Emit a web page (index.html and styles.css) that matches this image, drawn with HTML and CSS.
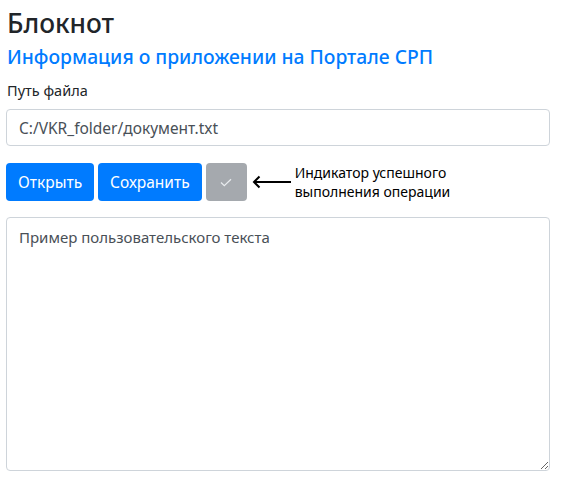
FILE: index.html
```html
<!DOCTYPE html>
<html lang="ru">
<head>
<meta charset="utf-8">
<title>Блокнот</title>
<link rel="stylesheet" href="styles.css">
</head>
<body>
<main class="page">
  <h1 class="title">Блокнот</h1>
  <a class="info-link" href="#">Информация о приложении на Портале СРП</a>
  <label class="label" for="path">Путь файла</label>
  <input class="field" id="path" type="text" value="C:/VKR_folder/документ.txt">
  <div class="actions">
    <button class="btn btn-primary" type="button">Открыть</button>
    <button class="btn btn-primary" type="button">Сохранить</button>
    <button class="btn btn-status" type="button" aria-label="Статус">
      <svg width="12" height="9" viewBox="0 0 12 9"><path d="M1 4.5 L4.3 7.6 L11 1.2" fill="none" stroke="#e9ecef" stroke-width="1.2"/></svg>
    </button>
    <svg class="arrow" width="40" height="14" viewBox="0 0 40 14"><path d="M39 7 H2 M7.5 1.5 L2 7 L7.5 12.5" fill="none" stroke="#000" stroke-width="2"/></svg>
    <p class="hint">Индикатор успешного<br>выполнения операции</p>
  </div>
  <textarea class="text">Пример пользовательского текста</textarea>
</main>
</body>
</html>
```
FILE: styles.css
```css
html, body { margin: 0; padding: 0; background: #fff; }
body { font-family: "Noto Sans", "Open Sans", sans-serif; color: #212529; }
.page { padding: 6px 15px 0 6px; display: flex; flex-direction: column; }
.title { margin: 0; font-size: 26.3px; font-weight: 500; line-height: 34px; padding-left: 1px; }
.info-link { margin-top: 4px; color: #007bff; text-decoration: none; font-size: 19.3px; font-weight: 500; line-height: 26px; padding-left: 1px; }
.label { margin-top: 10px; font-size: 14.5px; line-height: 20px; padding-left: 1px; }
.field {
  margin-top: 9px; height: 37px; box-sizing: border-box; width: 544px;
  border: 1px solid #ced4da; border-radius: 4px; padding: 0 12px;
  font-family: inherit; font-size: 15.5px; color: #495057; outline: none;
}
.actions { margin-top: 17px; display: flex; align-items: center; gap: 4px; }
.btn {
  height: 38px; box-sizing: border-box; border: 0; border-radius: 4px;
  font-family: inherit; font-size: 15.5px; color: #fff; padding: 0 12px; cursor: pointer;
}
.btn-primary { background: #007bff; }
.btn-status { background: #a5a9ae; width: 41px; padding: 0; display: flex; align-items: center; justify-content: center; }
.arrow { margin-left: 1px; }
.hint { margin: 0 0 0 -1px; font-size: 14px; line-height: 19px; color: #000; }
.text {
  margin-top: 16px; width: 544px; height: 254px; box-sizing: border-box;
  border: 1px solid #ced4da; border-radius: 4px; padding: 8px 12px;
  font-family: inherit; font-size: 15px; line-height: 22px; color: #495057; resize: vertical;
}
```
